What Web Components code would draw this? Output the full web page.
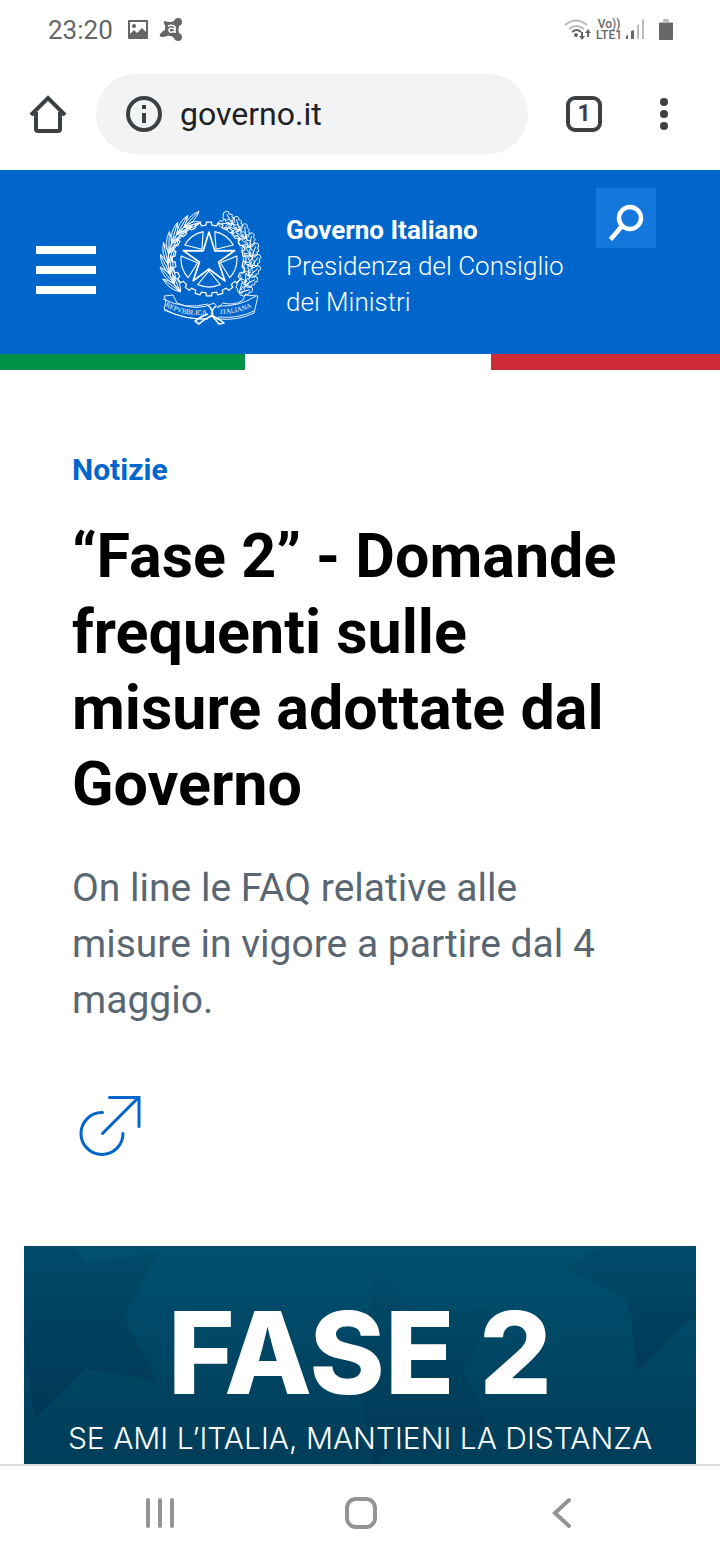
<!DOCTYPE html>
<html lang="it">
<head>
<meta charset="utf-8">
<meta name="viewport" content="width=device-width, initial-scale=1">
<title>Governo Italiano</title>
<style>
body{margin:0;background:#fff;font-family:Roboto,"Liberation Sans",sans-serif}
</style>
</head>
<body>
<status-bar time="23:20"></status-bar>
<browser-bar address="governo.it" tabs="1"></browser-bar>
<main>
<site-header>
<strong slot="name">Governo Italiano</strong>
<span slot="office">Presidenza del Consiglio dei Ministri</span>
</site-header>
<news-item href="#faq">
<span slot="category">Notizie</span>
<span slot="title">“Fase 2” - Domande frequenti sulle misure adottate dal Governo</span>
<span slot="summary">On line le FAQ relative alle misure in vigore a partire dal 4 maggio.</span>
</news-item>
<campaign-banner>
<span slot="title">FASE 2</span>
<span slot="claim">SE AMI L’ITALIA, MANTIENI LA DISTANZA</span>
</campaign-banner>
</main>
<system-nav></system-nav>
<script>
const define = (name, html, setup) => customElements.define(name, class extends HTMLElement {
  constructor() {
    super();
    this.attachShadow({ mode: 'open' }).innerHTML = `<style>*{box-sizing:border-box}svg{display:block}button{padding:0;border:0;background:none;color:inherit;font:inherit}</style>` + html;
  }
  connectedCallback() { if (setup) setup(this, this.shadowRoot); }
});

define('status-bar', `
<style>
:host{display:flex;align-items:center;justify-content:space-between;height:60px;padding:0 47px 0 48px;color:#666;box-sizing:border-box}
div{display:flex;align-items:center}
time{font-size:26px;line-height:32px;margin-right:14px}
.lte{font-size:12px;line-height:11px;font-weight:500;text-align:center;margin:0 4px}
.left svg+svg{margin-left:10px}
.battery{margin-left:14px}
</style>
<div class="left"><time></time>
<svg width="22" height="22" viewBox="0 0 22 22"><path fill="#666" fill-rule="evenodd" d="M2 1h18q1 0 1 1v17q0 1-1 1H2q-1 0-1-1V2q0-1 1-1zm1 2v12l4-4 3 3 5-5 4 4V3z"/><circle cx="7" cy="7" r="2" fill="#666"/></svg>
<svg width="24" height="24" viewBox="0 0 24 24"><path fill="#666" d="M6 3q5 2 9 0 1-3 4-3 4 0 4 4 0 3-3 4-1 4 0 7 3 1 3 4 0 4-4 4-3 0-4-3-3-3-7-2-2 1-6 1-2-1-1-3l3-3 2-1q1-4-1-7-1-2 1-2z"/><path d="M9 8q5-2 7 1v6M16 11q-6-2-6 1 0 4 6 1" fill="none" stroke="#fff" stroke-width="1.6"/></svg></div>
<div>
<svg width="28" height="24" viewBox="0 0 28 24" fill="none"><path d="M1 7Q12-2 23 7M5 11q7-6 15 0" stroke="#bbb" stroke-width="2"/><path d="M8 14q5-4 9 0" stroke="#666" stroke-width="2"/><circle cx="12" cy="17" r="2" fill="#666"/><path d="M18 14v6M24 19v-6" stroke="#666" stroke-width="2"/><path d="M15 18h6l-3 4zM21 15h6l-3-4z" fill="#666"/></svg>
<span class="lte">Vo))<br>LTE1</span>
<svg width="19" height="22" viewBox="0 0 19 22"><path fill="#666" d="M0 17l2-1v4H0zM5 12l3-1v9H5z"/><path fill="#bbb" d="M11 6l2-1v15h-2zM16 1l2-1v20h-2z"/></svg>
<svg class="battery" width="14" height="22" viewBox="0 0 14 22"><path fill="#bbb" d="M4 1q0-1 1-1h4q1 0 1 1v2h3q1 0 1 1H0q0-1 1-1h3z"/><path fill="#666" d="M0 4h14v16q0 1-1 1H1q-1 0-1-1z"/></svg>
</div>`, (el, root) => root.querySelector('time').textContent = el.getAttribute('time'));

define('browser-bar', `
<style>
:host{display:flex;align-items:center;height:110px;padding:0 46px 2px 28px;color:#3c4043;box-sizing:border-box}
form{flex:1;min-width:0;display:flex;align-items:center;height:80px;margin:0 38px 0 28px;padding:0 28px;border-radius:40px;background:#f1f3f4}
input{flex:1;min-width:0;margin-left:16px;padding:0;border:0;background:none;outline:0;color:#202124;font:32px/40px Roboto,sans-serif}
.tabs{width:36px;height:36px;border:4px solid #3c4043;border-radius:9px;font-size:23px;line-height:28px;font-weight:700}
.more{display:block;width:20px;margin-left:52px}
</style>
<button aria-label="Home"><svg width="40" height="40" viewBox="0 0 40 40"><path d="M3 21L20 4l17 17M8 18v17q0 2 2 2h20q2 0 2-2V18" fill="none" stroke="#3c4043" stroke-width="4"/></svg></button>
<form onsubmit="return false"><button type="button" aria-label="Informazioni sul sito"><svg width="40" height="40" viewBox="0 0 40 40"><circle cx="20" cy="20" r="16" fill="none" stroke="#3c4043" stroke-width="4"/><path fill="#3c4043" d="M18 11h4v4h-4zM18 19h4v10h-4z"/></svg></button><input type="text" aria-label="Indirizzo"></form>
<button class="tabs" aria-label="Schede"></button>
<button class="more" aria-label="Altro"><svg width="20" height="36" viewBox="0 0 20 36" fill="#3c4043"><circle cx="10" cy="6" r="4"/><circle cx="10" cy="18" r="4"/><circle cx="10" cy="30" r="4"/></svg></button>`,
(el, root) => {
  root.querySelector('input').value = el.getAttribute('address');
  root.querySelector('.tabs').textContent = el.getAttribute('tabs');
});

define('italy-emblem', `
<style>:host{display:block;width:108px;height:120px}text{font:7px "Liberation Serif",serif;fill:#fff}</style>
<svg width="108" height="120" viewBox="6 6 108 120" fill="none" stroke="#fff" stroke-width="0.9" stroke-linejoin="round">
<g class="gear"></g><g class="star"></g><g class="laurel"></g><g class="oak"></g>
<path fill="#06c" d="M14 96l9-1 4 8q20 9 37 0l4 5 5-5q12 3 20-3l2-5 13 1-4 17q-16 8-37 6l-6-4-5 4q-22 1-42-10l2-8z"/>
<path d="M13 99q22 11 45 5M14 110q22 10 44 9M68 106q21 1 38-10M68 117q20 2 36-6"/>
<path stroke-width="1.6" d="M58 105q6 6 4 11-8 3-13 8l-4-3q6-5 13-7M66 106q-6 5-3 10 6 3 11 7l-5 1q-4-5-7-8"/>
<path id="left" stroke="none" d="M15 106q20 12 48 8"/><path id="right" stroke="none" d="M70 114q20 0 38-10"/>
<g stroke="none"><text><textPath href="#left">REPVBBLICA</textPath></text><text><textPath href="#right">ITALIANA</textPath></text></g>
</svg>`, (el, root) => {
  const cx = 59, cy = 59, at = (r, deg) => {
    const a = deg * Math.PI / 180;
    return (cx + r * Math.cos(a)).toFixed(2) + ' ' + (cy + r * Math.sin(a)).toFixed(2);
  };
  let gear = '', star = '', facets = '';
  for (let i = 0; i < 20; i++) {
    const a = i * 18 - 90;
    gear += `${i ? 'L' : 'M'}${at(37, a - 4)}L${at(37, a + 4)}L${at(34, a + 5)}L${at(34, a + 13)}`;
  }
  for (let i = 0; i < 5; i++) {
    const a = i * 72 - 90;
    star += `${i ? 'L' : 'M'}${at(27, a)}L${at(10, a + 36)}`;
    facets += `M${at(12, a + 36)}L${at(28, a + 12)}A28 28 0 0 1 ${at(28, a + 60)}Z`;
  }
  root.querySelector('.gear').innerHTML = `<path stroke-width="1.2" d="${gear}Z"/>`;
  root.querySelector('.star').innerHTML = `<path stroke-width="1.7" d="${star}Z"/><path stroke-width="1.1" d="${facets}"/>`;
  const leaf = (x, y, deg, len, w) => `<path transform="translate(${x.toFixed(1)} ${y.toFixed(1)}) rotate(${deg.toFixed(0)})" d="M0 0Q${len / 2} ${-w} ${len} 0Q${len / 2} ${w} 0 0M0 0H${len - 2}"/>`;
  const lobed = (x, y, deg) => `<path transform="translate(${x.toFixed(1)} ${y.toFixed(1)}) rotate(${deg.toFixed(0)})" d="M0 0q1-4 3-2q1-4 4-2q2-3 4 0q3 1 3 4q-1 4-4 2q-2 4-4 1q-3 3-4 0q-2 1-2-3M0 0h11"/>`;
  let left = '', right = '';
  for (let i = 0; i < 8; i++) {
    const t = (134 + i * 14) * Math.PI / 180, x = 59 + 41 * Math.cos(t), y = 61 + 43 * Math.sin(t);
    const dir = t * 180 / Math.PI + 90;
    left += leaf(x, y, dir - 8, 22, 5) + leaf(x, y, dir + 22, 18, 5);
  }
  for (let i = 0; i < 9; i++) {
    const t = (46 - i * 13) * Math.PI / 180, x = 60 + 42 * Math.cos(t), y = 61 + 44 * Math.sin(t);
    const dir = t * 180 / Math.PI - 90;
    right += lobed(x, y, dir + 28) + lobed(x, y, dir - 30);
  }
  root.querySelector('.laurel').innerHTML = left;
  root.querySelector('.oak').innerHTML = right;
});

define('site-header', `
<style>
:host{display:block;color:#fff}
header{display:flex;align-items:center;padding:36px 64px 28px 36px;background:#06c}
.menu{margin-right:60px}
a{flex:1;min-width:0;display:block;margin:0 8px 0 22px;color:#fff;text-decoration:none;font-size:26px;line-height:36px}
slot{display:block}
slot[name=office]{font-weight:300}
.search{align-self:flex-start;margin-top:-18px;background:#1477db}
.flag{display:grid;grid-template-columns:245fr 246fr 229fr;height:16px}
.flag :first-child{background:#009246}.flag :last-child{background:#ce2b37}
</style>
<header>
<button class="menu" aria-label="Menu"><svg width="60" height="56" viewBox="0 0 60 56" fill="#fff"><path d="M0 8h60v8H0zM0 28h60v8H0zM0 48h60v8H0z"/></svg></button>
<italy-emblem></italy-emblem>
<a href="#home"><slot name="name"></slot><slot name="office"></slot></a>
<button class="search" aria-label="Cerca"><svg width="60" height="60" viewBox="0 0 60 60" fill="none" stroke="#fff"><circle cx="34" cy="30" r="11" stroke-width="4.5"/><path d="M26 38L14.500 51.500" stroke-width="4.500"/></svg></button>
</header>
<div class="flag"><span></span><span></span><span></span></div>`);

define('news-item', `
<style>
:host{display:block;padding:80px 72px}
a{display:block;color:inherit;text-decoration:none}
.category{color:#06c;font-size:30px;line-height:40px;font-weight:700}
h1{margin:28px 0 0;color:#000;font-size:61px;line-height:76px;font-weight:700}
p{margin:38px 24px 0 0;color:#5a6772;font-size:39px;line-height:56px}
.open{width:80px;margin-top:58px}
</style>
<a class="category" href="#notizie"><slot name="category"></slot></a>
<h1><a class="link"><slot name="title"></slot></a></h1>
<p><slot name="summary"></slot></p>
<a class="open link" aria-label="Apri la notizia"><svg width="80" height="80" viewBox="0 0 80 80" fill="none" stroke="#06c" stroke-width="3" stroke-linecap="round"><path d="M30.500 26.500A21 21 0 1 0 51 47.500M30.500 47.500L66 12M37.500 11.500h29.500v29"/></svg></a>`,
(el, root) => root.querySelectorAll('.link').forEach(a => a.href = el.getAttribute('href')));

define('campaign-banner', `
<style>
:host{display:block;position:relative;margin:0 24px;padding:39px 0 9px;overflow:hidden;background:linear-gradient(#005070,#003d59);color:#fff;text-align:center;font-family:Inter,sans-serif;box-sizing:border-box}
svg{position:absolute;inset:0;width:100%;height:100%}
h2,p{position:relative;margin:0}
h2{font-size:114px;line-height:136px;font-weight:800}
p{font-size:30px;line-height:34px;font-weight:300}
</style>
<svg viewBox="0 0 672 218" preserveAspectRatio="xMinYMin slice"><defs><linearGradient id="shade" x2="0" y2="1"><stop stop-color="#002b46" stop-opacity=".12"/><stop offset="1" stop-color="#002b46" stop-opacity=".4"/></linearGradient></defs>
<g fill="url(#shade)"><path d="M0 0h48l15 17 71-10-34 64 32 64-71-13-51 51-8-63-2-30z"/><path d="M351 25l48 45 74-10-34 65 30 65-70-13-50 43-10-67-60-35 62-30z" opacity=".6"/><path d="M579 0l-38 21 63 32 10 72 52-52 6 2V0z"/></g></svg>
<h2><slot name="title"></slot></h2><p><slot name="claim"></slot></p>`);

define('system-nav', `
<style>
:host{display:block;position:sticky;bottom:0;border-top:2px solid #ddd;background:#fff}
nav{display:grid;grid-template-columns:320fr 82fr 318fr;height:94px;align-items:center}
button{justify-self:center}
</style>
<nav><button aria-label="App recenti"><svg width="32" height="32" viewBox="0 0 32 32" stroke="#949494" stroke-width="4" stroke-linecap="round"><path d="M4 3v26M16 3v26M28 3v26"/></svg></button>
<button aria-label="Home"><svg width="32" height="32" viewBox="0 0 32 32" fill="none" stroke="#949494" stroke-width="4"><rect x="2" y="2" width="28" height="28" rx="9"/></svg></button>
<button aria-label="Indietro"><svg width="32" height="32" viewBox="0 0 32 32" fill="none" stroke="#949494" stroke-width="4" stroke-linecap="round"><path d="M24 3L10 16l14 13"/></svg></button></nav>`);
</script>
</body>
</html>
